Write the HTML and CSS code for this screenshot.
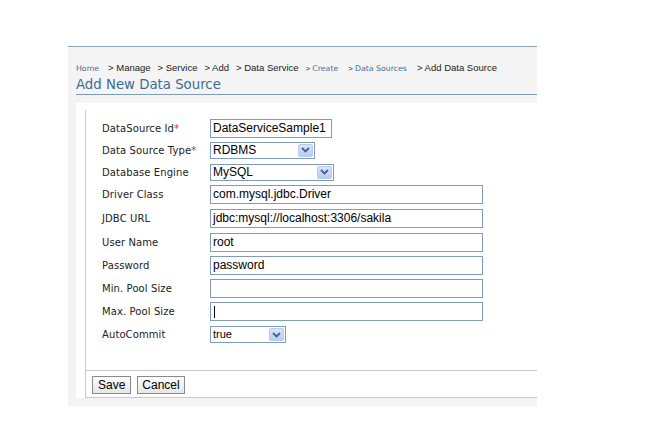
FILE: index.html
```html
<!DOCTYPE html>
<html>
<head>
<meta charset="utf-8">
<link rel="stylesheet" href="styles.css">
</head>
<body>
<div class="panel">
  <div class="crumbs">
    <span class="link">Home</span>
    <span class="sep first">&gt; Manage</span>
    <span class="sep">&gt; Service</span>
    <span class="sep">&gt; Add</span>
    <span class="sep">&gt; Data Service</span>
    <span class="sep small">&gt; <span class="link">Create</span></span>
    <span class="sep small wide-gap">&gt; <span class="link">Data Sources</span></span>
    <span class="sep wide-gap">&gt; Add Data Source</span>
  </div>
  <h1 class="title">Add New Data Source</h1>
  <div class="content">
    <div class="box">
      <div class="rows">
        <div class="row r22"><span class="label">DataSource Id<span class="req">*</span></span><div class="field w122">DataServiceSample1</div></div>
        <div class="row r22"><span class="label">Data Source Type<span class="req">*</span></span><div class="select w105"><span class="val">RDBMS</span><span class="arrow"><svg width="9" height="6" viewBox="0 0 9 6"><path d="M1 1 L4.5 4.5 L8 1" fill="none" stroke="#4d6185" stroke-width="1.8"/></svg></span></div></div>
        <div class="row r22"><span class="label">Database Engine</span><div class="select w124"><span class="val">MySQL</span><span class="arrow"><svg width="9" height="6" viewBox="0 0 9 6"><path d="M1 1 L4.5 4.5 L8 1" fill="none" stroke="#4d6185" stroke-width="1.8"/></svg></span></div></div>
        <div class="row r23"><span class="label">Driver Class</span><div class="field wide">com.mysql.jdbc.Driver</div></div>
        <div class="row r24"><span class="label">JDBC URL</span><div class="field wide">jdbc:mysql://localhost:3306/sakila</div></div>
        <div class="row r24"><span class="label">User Name</span><div class="field wide">root</div></div>
        <div class="row r23"><span class="label">Password</span><div class="field wide">password</div></div>
        <div class="row r23"><span class="label">Min. Pool Size</span><div class="field wide"></div></div>
        <div class="row r23"><span class="label">Max. Pool Size</span><div class="field wide"><span class="caret"></span></div></div>
        <div class="row r23"><span class="label">AutoCommit</span><div class="select w76 small-sel"><span class="val">true</span><span class="arrow"><svg width="9" height="6" viewBox="0 0 9 6"><path d="M1 1 L4.5 4.5 L8 1" fill="none" stroke="#4d6185" stroke-width="1.8"/></svg></span></div></div>
      </div>
      <div class="buttons">
        <button class="btn">Save</button>
        <button class="btn narrow">Cancel</button>
      </div>
    </div>
  </div>
</div>
</body>
</html>
```
FILE: styles.css
```css
html, body {
  margin: 0;
  padding: 0;
  background: #ffffff;
}
body {
  padding-top: 46px;
  padding-left: 68px;
  width: 469px;
  font-family: "DejaVu Sans", Verdana, sans-serif;
}
.panel {
  background: #f4f4f4;
  border-top: 1px solid #8fa5bb;
  height: 360px;
  padding-left: 8px;
  box-sizing: border-box;
  width: 469px;
}
.crumbs {
  padding-top: 15px;
  height: 14px;
  font-family: "Liberation Sans", Arial, sans-serif;
  font-size: 9.5px;
  color: #222;
  white-space: nowrap;
  display: flex;
  align-items: baseline;
}
.crumbs .sep {
  margin-left: 7px;
}
.crumbs .first {
  margin-left: 9px;
}
.crumbs .wide-gap {
  margin-left: 10px;
}
.crumbs .link {
  color: #4a6c92;
  font-family: "DejaVu Sans", Verdana, sans-serif;
  font-size: 7.8px;
}
.crumbs .small {
  font-size: 7.8px;
}
.title {
  margin: 0;
  font-weight: normal;
  font-size: 13.3px;
  color: #3e6b96;
  height: 19px;
  line-height: 17px;
  box-sizing: border-box;
  border-bottom: 1px solid #7f9cb8;
}
.content {
  margin-top: 8px;
  background: #ffffff;
  height: 295px;
  padding-left: 9px;
  padding-top: 7px;
  box-sizing: border-box;
}
.box {
  border-left: 1px solid #c9c9c9;
  border-bottom: 1px solid #c9c9c9;
  height: 288px;
  box-sizing: border-box;
  display: flex;
  flex-direction: column;
}
.rows {
  padding-top: 7px;
  padding-left: 16px;
  height: 261px;
  box-sizing: border-box;
  border-bottom: 1px solid #c9c9c9;
}
.row {
  display: flex;
  align-items: center;
}
.r22 { height: 22px; }
.r23 { height: 23px; }
.r24 { height: 24px; }
.label {
  width: 108px;
  font-size: 10px;
  color: #222;
  letter-spacing: 0.1px;
}
.req {
  color: #d03030;
}
.field {
  height: 19px;
  box-sizing: border-box;
  border: 1px solid #7f9db9;
  font-family: "Liberation Sans", Arial, sans-serif;
  font-size: 12px;
  line-height: 17px;
  padding-left: 2px;
  color: #000;
  background: #fff;
  white-space: nowrap;
  overflow: hidden;
  display: flex;
  align-items: center;
}
.w122 { width: 122px; }
.wide { width: 273px; }
.caret {
  width: 1px;
  height: 12px;
  background: #000;
  margin-left: 1px;
}
.select {
  height: 17px;
  box-sizing: border-box;
  border: 1px solid #7f9db9;
  background: #fff;
  display: flex;
  align-items: stretch;
  font-family: "Liberation Sans", Arial, sans-serif;
  font-size: 12px;
}
.w105 { width: 105px; }
.w124 { width: 124px; }
.w76 { width: 76px; }
.select .val {
  flex: 1;
  padding-left: 2px;
  line-height: 15px;
}
.small-sel .val {
  font-size: 11px;
}
.select .arrow {
  width: 15px;
  margin: 1px;
  box-sizing: border-box;
  border: 1px solid #b9cbf0;
  border-radius: 2px;
  background: linear-gradient(#d8e4fb, #b7cbf4);
  display: flex;
  align-items: center;
  justify-content: center;
}
.buttons {
  display: flex;
  gap: 6px;
  padding-left: 6px;
  padding-top: 5px;
}
.btn {
  height: 18px;
  margin: 0;
  padding: 0 5px;
  font-family: "Liberation Sans", Arial, sans-serif;
  font-size: 12px;
  color: #000;
  background: linear-gradient(#fdfdfd, #e6e6e6);
  border: 1px solid #8a8a8a;
  border-radius: 0;
  line-height: 14px;
}
.btn.narrow {
  padding: 0 4px;
}
```
